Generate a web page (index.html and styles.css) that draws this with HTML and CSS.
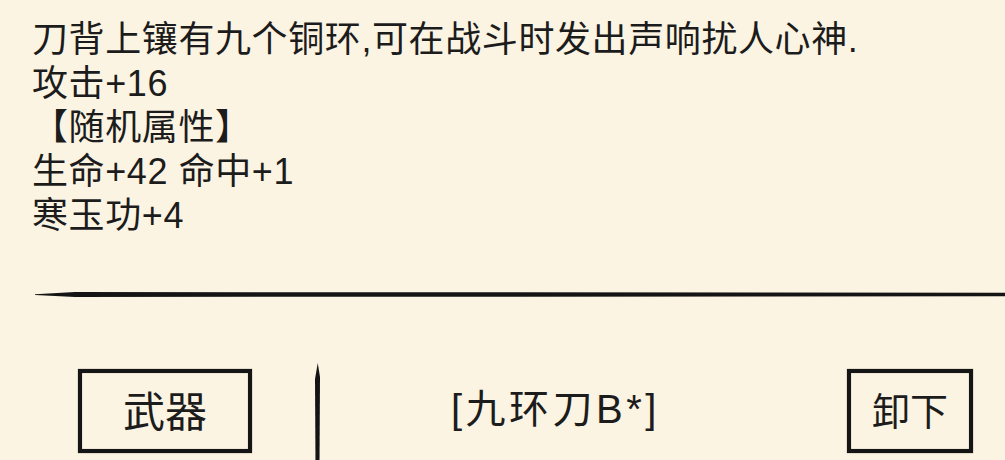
FILE: index.html
```html
<!DOCTYPE html>
<html lang="zh-CN">
<head>
<meta charset="utf-8">
<title>九环刀</title>
<link rel="stylesheet" href="styles.css">
</head>
<body>
<div class="panel">
  <div class="desc">
    <div class="line">刀背上镶有九个铜环,可在战斗时发出声响扰人心神.</div>
    <div class="line">攻击+16</div>
    <div class="line">【随机属性】</div>
    <div class="line">生命+42 命中+1</div>
    <div class="line">寒玉功+4</div>
  </div>
  <div class="rule"></div>
  <div class="footer">
    <div class="btn btn-type">武器</div>
    <div class="stroke"></div>
    <div class="item-name">[九环刀B*]</div>
    <div class="btn btn-off">卸下</div>
  </div>
</div>
</body>
</html>
```

FILE: styles.css
```css
html, body {
  margin: 0;
  padding: 0;
  background: #fcf4e3;
  overflow: hidden;
}

body {
  font-family: "Liberation Sans", "Noto Sans CJK SC", sans-serif;
  color: #1c1c1c;
}

.panel {
  width: 1005px;
  height: 460px;
}

.desc {
  padding: 18px 0 0 32px;
  font-size: 36px;
  line-height: 44px;
}

.desc .line {
  letter-spacing: 0.6px;
}

/* brush-stroke divider, tapered at the left end */
.rule {
  margin: 54px 0 0 35px;
  height: 5px;
  background: #141414;
  clip-path: polygon(0 45%, 40px 0, 100% 15%, 100% 85%, 40px 100%, 0 60%);
}

.footer {
  display: flex;
  align-items: flex-start;
  margin-top: 72px;
  padding-left: 78px;
}

.btn {
  box-sizing: border-box;
  height: 84px;
  padding-bottom: 6px;
  border: 4px solid #151515;
  box-shadow: 0 0 1px rgba(0, 0, 0, 0.6), inset 0 0 1px rgba(0, 0, 0, 0.6);
  display: flex;
  align-items: center;
  justify-content: center;
  font-size: 38px;
}

.btn-type {
  width: 174px;
  font-size: 42px;
}

.btn-off {
  width: 126px;
  margin-left: auto;
  margin-right: 32px;
}

/* vertical brush stroke with a pointed top */
.stroke {
  width: 5px;
  height: 102px;
  margin: -6px 0 0 63px;
  background: #141414;
  clip-path: polygon(55% 0, 100% 14px, 90% 100%, 10% 100%, 0 16px);
}

.item-name {
  margin-left: 131px;
  margin-top: 16px;
  font-size: 40px;
  line-height: 48px;
  letter-spacing: 3.5px;
}
```
